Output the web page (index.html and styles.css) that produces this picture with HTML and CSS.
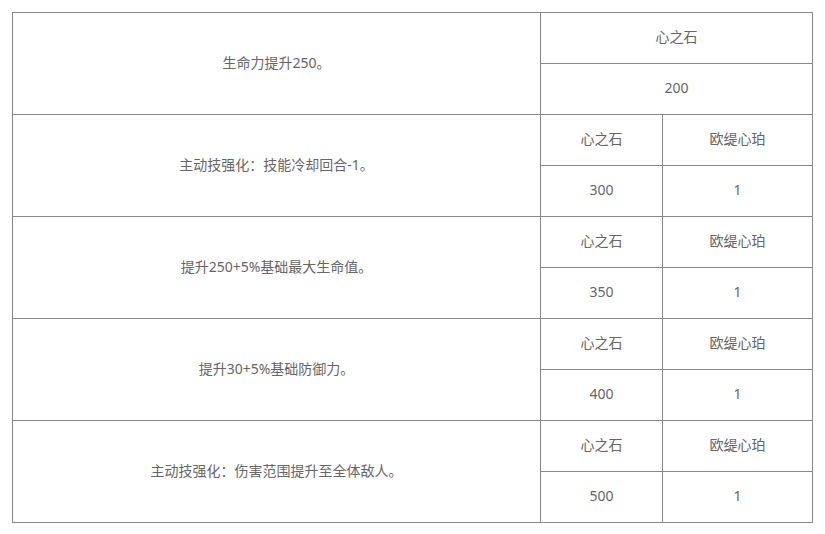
FILE: index.html
```html
<!DOCTYPE html>
<html lang="zh">
<head>
<meta charset="utf-8">
<link rel="stylesheet" href="styles.css">
</head>
<body>
<table class="gems">
  <colgroup>
    <col class="c-desc"><col class="c-a"><col class="c-b">
  </colgroup>
  <tbody>
    <tr><td rowspan="2">生命力提升250。</td><td colspan="2">心之石</td></tr>
    <tr><td colspan="2">200</td></tr>
    <tr><td rowspan="2">主动技强化：技能冷却回合-1。</td><td>心之石</td><td>欧缇心珀</td></tr>
    <tr><td>300</td><td>1</td></tr>
    <tr><td rowspan="2">提升250+5%基础最大生命值。</td><td>心之石</td><td>欧缇心珀</td></tr>
    <tr><td>350</td><td>1</td></tr>
    <tr><td rowspan="2">提升30+5%基础防御力。</td><td>心之石</td><td>欧缇心珀</td></tr>
    <tr><td>400</td><td>1</td></tr>
    <tr><td rowspan="2">主动技强化：伤害范围提升至全体敌人。</td><td>心之石</td><td>欧缇心珀</td></tr>
    <tr><td>500</td><td>1</td></tr>
  </tbody>
</table>
</body>
</html>
```
FILE: styles.css
```css
html, body {
  margin: 0;
  padding: 0;
  background: #ffffff;
}
body {
  padding: 12px;
  font-family: "Noto Sans", "Noto Sans CJK SC", sans-serif;
  font-size: 14px;
  color: #666666;
}
.gems {
  border-collapse: collapse;
  table-layout: fixed;
  width: 800px;
}
.c-desc { width: 528px; }
.c-a { width: 122px; }
.c-b { width: 150px; }
.gems td {
  border: 1px solid #888888;
  height: 48px;
  padding: 0 0 2px;
  text-align: center;
  vertical-align: middle;
  line-height: 20px;
}
```
